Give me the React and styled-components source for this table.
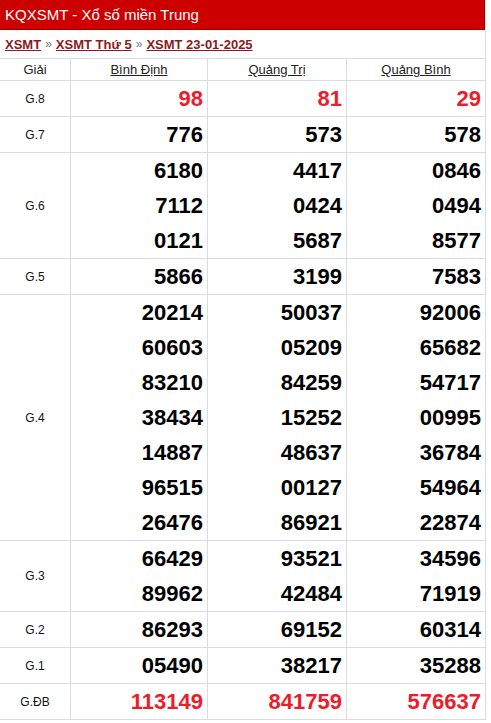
import React from "react";
import styled, { createGlobalStyle } from "styled-components";

const Global = createGlobalStyle`
  html, body { margin: 0; padding: 0; background: #fff; }
  body { font-family: "Liberation Sans", Arial, sans-serif; }
  * { box-sizing: border-box; }
`;

const Page = styled.div`
  width: 486px;
  border-right: 1px solid #dcdcdc;
`;

const TitleBar = styled.div`
  height: 30px;
  background: #cc0000;
  border-bottom: 1px solid #a80000;
  border-right: 1px solid #b00000;
  color: #fff;
  font-size: 15px;
  display: flex;
  align-items: center;
  padding-left: 5px;
`;

const Crumbs = styled.div`
  height: 29px;
  border-bottom: 1px solid #dcdcdc;
  display: flex;
  align-items: center;
  padding-left: 5px;
  font-size: 13px;
  font-weight: bold;
`;

const Crumb = styled.a`
  color: #8b1a1a;
  text-decoration: underline;
`;

const Sep = styled.span`
  color: #777;
  font-weight: normal;
  font-size: 12px;
  margin: 0 4px;
`;

const Row = styled.div`
  display: grid;
  grid-template-columns: 71px 137px 139px 1fr;
  border-bottom: 1px solid #dcdcdc;
`;

const Cell = styled.div`
  border-right: 1px solid #dcdcdc;
  &:last-child { border-right: none; }
`;

const HeadCell = styled(Cell)`
  height: 21px;
  display: flex;
  align-items: center;
  justify-content: center;
  font-size: 13px;
  color: #222;
  text-decoration: ${(p) => (p.$link ? "underline" : "none")};
`;

const Label = styled(Cell)`
  display: flex;
  align-items: center;
  justify-content: center;
  font-size: 12px;
  color: #111;
`;

const Nums = styled(Cell)`
  display: flex;
  flex-direction: column;
`;

const Num = styled.div`
  height: 35px;
  line-height: 35px;
  text-align: right;
  padding-right: 4px;
  font-size: 22px;
  font-weight: bold;
  color: ${(p) => (p.$red ? "#ec1c2a" : "#000")};
`;

const data = [
  ["G.8", ["98"], ["81"], ["29"], true],
  ["G.7", ["776"], ["573"], ["578"]],
  ["G.6", ["6180", "7112", "0121"], ["4417", "0424", "5687"], ["0846", "0494", "8577"]],
  ["G.5", ["5866"], ["3199"], ["7583"]],
  [
    "G.4",
    ["20214", "60603", "83210", "38434", "14887", "96515", "26476"],
    ["50037", "05209", "84259", "15252", "48637", "00127", "86921"],
    ["92006", "65682", "54717", "00995", "36784", "54964", "22874"],
  ],
  ["G.3", ["66429", "89962"], ["93521", "42484"], ["34596", "71919"]],
  ["G.2", ["86293"], ["69152"], ["60314"]],
  ["G.1", ["05490"], ["38217"], ["35288"]],
  ["G.ĐB", ["113149"], ["841759"], ["576637"], true],
];

export default function App() {
  return (
    <Page>
      <Global />
      <TitleBar>KQXSMT - Xổ số miền Trung</TitleBar>
      <Crumbs>
        <Crumb>XSMT</Crumb>
        <Sep>»</Sep>
        <Crumb>XSMT Thứ 5</Crumb>
        <Sep>»</Sep>
        <Crumb>XSMT 23-01-2025</Crumb>
      </Crumbs>
      <Row>
        <HeadCell>Giải</HeadCell>
        <HeadCell $link>Bình Định</HeadCell>
        <HeadCell $link>Quảng Trị</HeadCell>
        <HeadCell $link>Quảng Bình</HeadCell>
      </Row>
      {data.map(([label, a, b, c, red]) => (
        <Row key={label}>
          <Label>{label}</Label>
          {[a, b, c].map((col, i) => (
            <Nums key={i}>
              {col.map((n) => (
                <Num key={n} $red={red}>
                  {n}
                </Num>
              ))}
            </Nums>
          ))}
        </Row>
      ))}
    </Page>
  );
}
